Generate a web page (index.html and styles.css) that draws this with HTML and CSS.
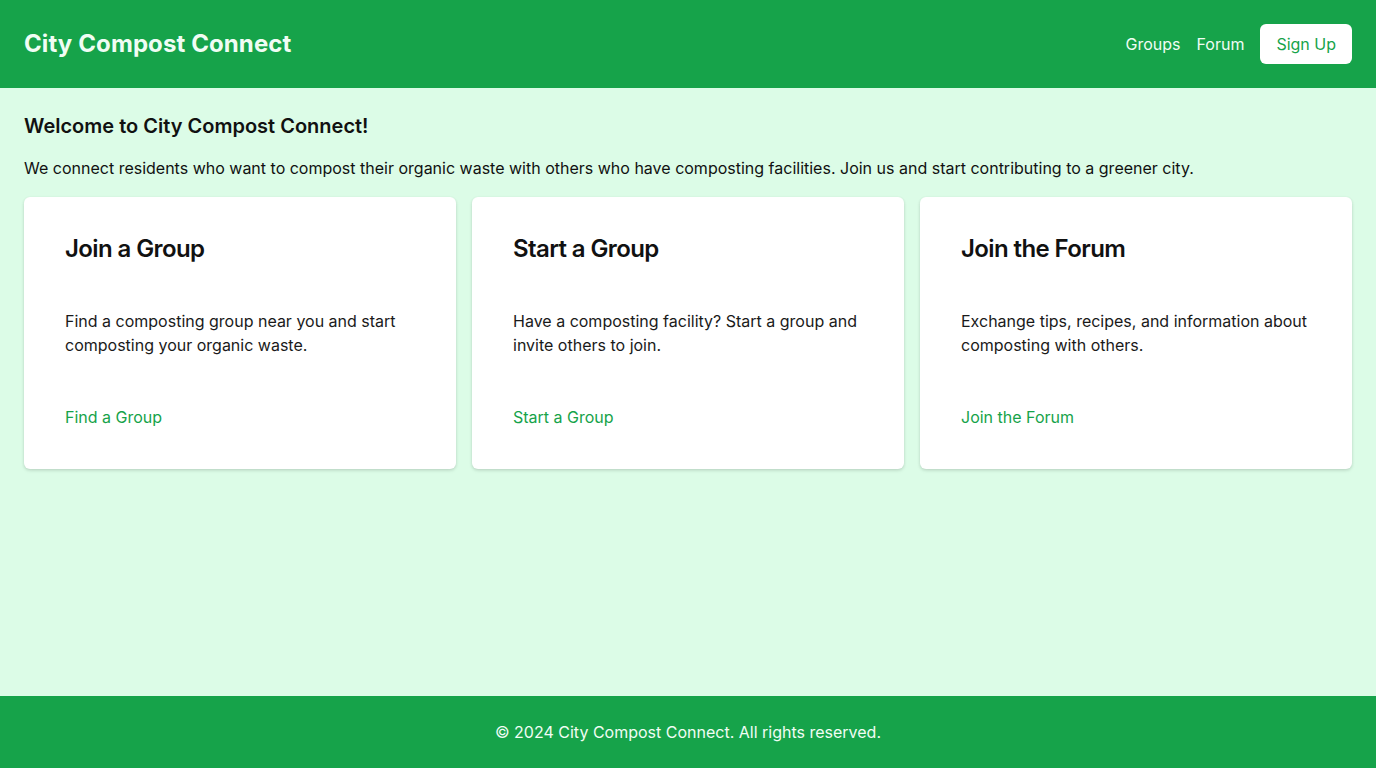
FILE: index.html
```html
<!DOCTYPE html>
<html lang="en">
<head>
<meta charset="utf-8">
<title>City Compost Connect</title>
<link rel="stylesheet" href="styles.css">
</head>
<body>
<div class="page">
  <header class="site-header">
    <div class="brand">City Compost Connect</div>
    <nav class="nav">
      <a class="nav-link" href="#">Groups</a>
      <a class="nav-link" href="#">Forum</a>
      <a class="btn-signup" href="#">Sign Up</a>
    </nav>
  </header>
  <main class="main">
    <h2 class="welcome">Welcome to City Compost Connect!</h2>
    <p class="intro">We connect residents who want to compost their organic waste with others who have composting facilities. Join us and start contributing to a greener city.</p>
    <div class="cards">
      <div class="card">
        <h3 class="card-title">Join a Group</h3>
        <p class="card-text">Find a composting group near you and start composting your organic waste.</p>
        <a class="card-link" href="#">Find a Group</a>
      </div>
      <div class="card">
        <h3 class="card-title">Start a Group</h3>
        <p class="card-text">Have a composting facility? Start a group and invite others to join.</p>
        <a class="card-link" href="#">Start a Group</a>
      </div>
      <div class="card">
        <h3 class="card-title">Join the Forum</h3>
        <p class="card-text">Exchange tips, recipes, and information about composting with others.</p>
        <a class="card-link" href="#">Join the Forum</a>
      </div>
    </div>
  </main>
  <footer class="site-footer">© 2024 City Compost Connect. All rights reserved.</footer>
</div>
</body>
</html>
```

FILE: styles.css
```css
* { box-sizing: border-box; }
html, body { margin: 0; padding: 0; }
body {
  font-family: Inter, "Noto Sans", sans-serif;
  font-size: 16px;
  line-height: 24px;
  color: #111;
  background: #dcfce7;
}
.page {
  min-height: 100vh;
  display: flex;
  flex-direction: column;
}
.site-header {
  background: #16a34a;
  height: 88px;
  padding: 0 24px;
  display: flex;
  align-items: center;
  justify-content: space-between;
}
.brand {
  color: #f0fdf4;
  font-size: 24px;
  line-height: 32px;
  font-weight: 700;
  letter-spacing: 0.1px;
}
.nav {
  display: flex;
  align-items: center;
  gap: 16px;
}
.nav-link {
  color: #f0fdf4;
  text-decoration: none;
}
.btn-signup {
  background: #fff;
  color: #16a34a;
  text-decoration: none;
  padding: 8px 16px;
  border-radius: 6px;
  line-height: 24px;
}
.main {
  flex: 1;
  padding: 24px;
}
.welcome {
  margin: 0 0 16px;
  font-size: 20px;
  line-height: 28px;
  font-weight: 600;
}
.intro {
  margin: 0 0 17px;
}
.cards {
  display: grid;
  grid-template-columns: repeat(3, 1fr);
  gap: 16px;
}
.card {
  background: #fff;
  border-radius: 6px;
  padding: 40px 40px 40px 41px;
  box-shadow: 0 1px 3px rgba(0,0,0,0.12), 0 2px 4px rgba(0,0,0,0.06);
  display: flex;
  flex-direction: column;
  align-items: flex-start;
}
.card-title {
  margin: 0 0 48px;
  font-size: 24px;
  line-height: 24px;
  font-weight: 600;
  letter-spacing: -0.6px;
}
.card-text {
  margin: 0 0 48px;
  color: #1a1a1a;
}
.card-link {
  color: #16a34a;
  text-decoration: none;
}
.site-footer {
  background: #16a34a;
  color: #f0fdf4;
  height: 72px;
  display: flex;
  align-items: center;
  justify-content: center;
}
```
